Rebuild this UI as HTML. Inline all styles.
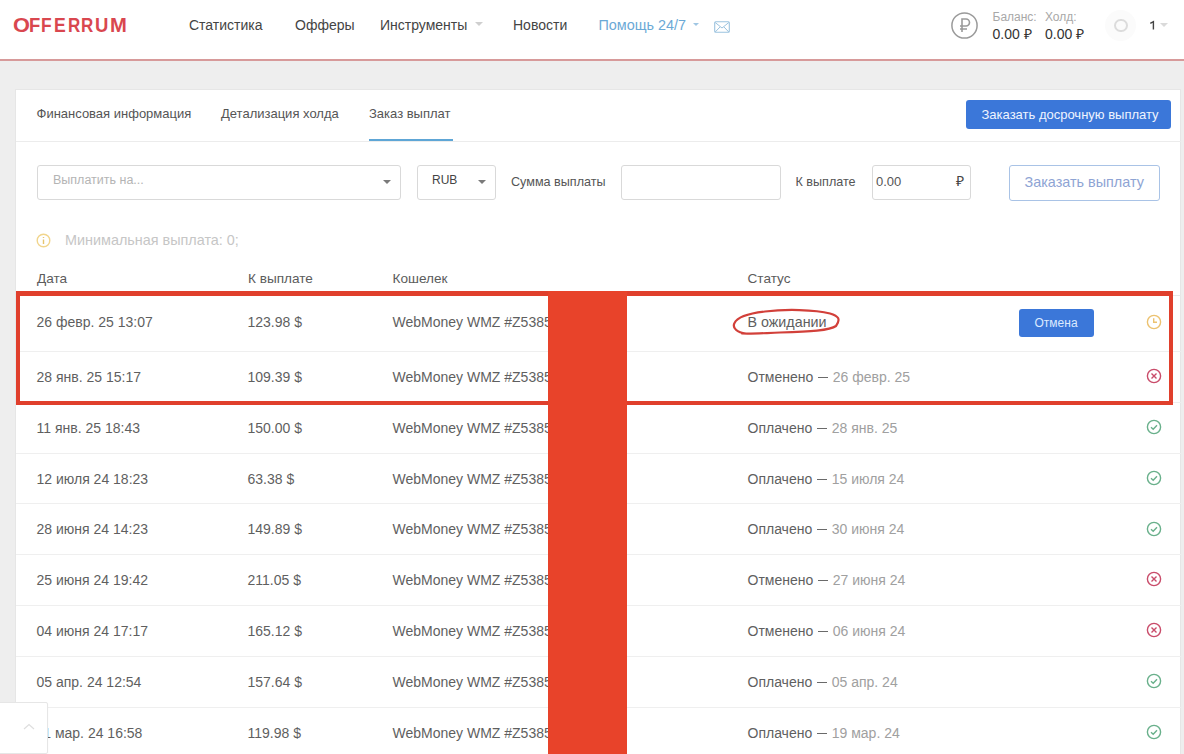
<!DOCTYPE html>
<html><head><meta charset="utf-8">
<style>
*{margin:0;padding:0;box-sizing:border-box}
html,body{width:1184px;height:754px;overflow:hidden;background:#eeeeee;font-family:"Liberation Sans",sans-serif;position:relative}
.a{position:absolute;white-space:nowrap}
.t14{font-size:14px;line-height:14px}
.t13{font-size:13px;line-height:13px}
.t12{font-size:12px;line-height:12px}
#hdr{position:absolute;left:0;top:0;width:1184px;height:59px;background:#fff}
#hline{position:absolute;left:0;top:59.3px;width:1184px;height:1.7px;background:#d79a9a}
.nav{color:#444}
#card{position:absolute;left:15px;top:89px;width:1166px;height:680px;background:#fff;border:1px solid #e6e6e6}
.inp{position:absolute;border:1px solid #d9d9d9;border-radius:3px;background:#fff}
.caret{position:absolute;width:0;height:0;border-left:4px solid transparent;border-right:4px solid transparent;border-top:4px solid #7a7a7a}
.div{position:absolute;left:16px;width:1165px;height:1px;background:#efefef}
.cell{color:#5f5f5f}
.sd{color:#a0a0a0}
.dash{display:inline-block;width:10px;height:1px;background:#6a6a6a;vertical-align:4px;margin:0 4.5px 0 5px}
</style></head><body>
<div id="hdr"></div>
<div id="hline"></div>
<div class="a" style="left:0;top:0;font-size:20px;line-height:20px;font-weight:bold;color:#d9474f"><span class="a" style="left:13.0px;top:15px;transform:scaleX(1.086);transform-origin:0 0">O</span><span class="a" style="left:29.3px;top:15px;transform:scaleX(0.92);transform-origin:0 0">F</span><span class="a" style="left:40.9px;top:15px;transform:scaleX(0.87);transform-origin:0 0">F</span><span class="a" style="left:53.6px;top:15px;transform:scaleX(0.88);transform-origin:0 0">E</span><span class="a" style="left:67.8px;top:15px;transform:scaleX(0.85);transform-origin:0 0">R</span><span class="a" style="left:80.9px;top:15px;transform:scaleX(0.85);transform-origin:0 0">R</span><span class="a" style="left:95.1px;top:15px;transform:scaleX(0.925);transform-origin:0 0">U</span><span class="a" style="left:110.3px;top:15px;transform:scaleX(1.01);transform-origin:0 0">M</span></div>
<div class="a t14 nav" style="left:189px;top:17.5px">Статистика</div>
<div class="a t14 nav" style="left:295px;top:17.5px">Офферы</div>
<div class="a t14 nav" style="left:380px;top:17.5px">Инструменты</div>
<div class="caret" style="left:475px;top:22px;border-top-color:#cfcfcf"></div>
<div class="a t14 nav" style="left:513px;top:17.5px">Новости</div>
<div class="a" style="left:598.5px;top:17.5px;font-size:14.4px;line-height:14px;color:#6ba9d6">Помощь 24/7</div>
<div class="caret" style="left:693px;top:22.5px;border-left-width:3.5px;border-right-width:3.5px;border-top-width:3.5px;border-top-color:#9fc6e3"></div>
<svg class="a" style="left:713.5px;top:20.5px" width="16" height="12" viewBox="0 0 16 12"><rect x="0.7" y="0.7" width="14.6" height="10.6" rx="1" fill="none" stroke="#9cc3df" stroke-width="1.1"/><path d="M1.2 1.5 L8 7 L14.8 1.5 M1.2 11 L6 6 M14.8 11 L10 6" fill="none" stroke="#9cc3df" stroke-width="1"/></svg>
<svg class="a" style="left:950px;top:11px" width="29" height="29" viewBox="0 0 29 29"><circle cx="14.5" cy="14.5" r="12.6" fill="none" stroke="#9a9a9a" stroke-width="1.5"/><path d="M12 21 V8 h4 a3.5 3.5 0 0 1 0 7 h-6 M10 18 h7" fill="none" stroke="#9a9a9a" stroke-width="1.6"/></svg>
<div class="a t12" style="left:992.5px;top:10.5px;color:#a8a8a8">Баланс:</div>
<div class="a t12" style="left:1045px;top:10.5px;color:#a8a8a8">Холд:</div>
<div class="a t14" style="left:992.5px;top:27px;color:#333">0.00 ₽</div>
<div class="a t14" style="left:1045px;top:27px;color:#333">0.00 ₽</div>
<div class="a" style="left:1105px;top:9.5px;width:31px;height:31px;border-radius:50%;background:#fbfbfb"></div>
<div class="a" style="left:1114px;top:18.5px;width:13.5px;height:13.5px;border-radius:50%;border:2.8px solid #dcdcdc"></div>
<svg class="a" style="left:1147px;top:19px" width="10" height="13" viewBox="0 0 10 13"><path d="M3.3 4.4 L6.4 2.6 V10.6" fill="none" stroke="#444" stroke-width="1.4"/></svg>
<div class="caret" style="left:1160px;top:23px;border-top-color:#dadada"></div>

<div id="card"></div>
<div class="a t13" style="left:36.5px;top:107px;color:#555">Финансовая информация</div>
<div class="a t13" style="left:221px;top:107px;color:#555">Детализация холда</div>
<div class="a t13" style="left:369px;top:107px;color:#555">Заказ выплат</div>
<div class="a" style="left:369px;top:139px;width:84px;height:3px;background:#5ea6d6"></div>
<div class="a" style="left:16px;top:141px;width:1165px;height:1px;background:#ececec"></div>
<div class="a" style="left:966px;top:100px;width:205px;height:29px;border-radius:3px;background:#3b77d9"></div>
<div class="a t13" style="left:981.5px;top:107.5px;color:#eef4ff">Заказать досрочную выплату</div>
<div class="inp" style="left:37px;top:164.5px;width:364px;height:35px"></div>
<div class="a" style="left:53px;top:173.5px;font-size:12.5px;line-height:13px;color:#b4b4b4">Выплатить на...</div>
<div class="caret" style="left:383px;top:180px"></div>
<div class="inp" style="left:417px;top:164.5px;width:79px;height:35px"></div>
<div class="a t12" style="left:432px;top:173.5px;color:#444">RUB</div>
<div class="caret" style="left:477.5px;top:180px"></div>
<div class="a" style="left:511px;top:176px;font-size:12.6px;line-height:13px;color:#555">Сумма выплаты</div>
<div class="inp" style="left:621px;top:164.5px;width:159.5px;height:35px"></div>
<div class="a" style="left:795.5px;top:176px;font-size:12.6px;line-height:13px;color:#555">К выплате</div>
<div class="inp" style="left:871.5px;top:164.5px;width:99px;height:35px"></div>
<div class="a t13" style="left:876px;top:175px;color:#555">0.00</div>
<div class="a t14" style="left:956px;top:174px;color:#444">₽</div>
<div class="a" style="left:1009px;top:164.5px;width:151px;height:36px;border:1px solid #a9c3e6;border-radius:3px"></div>
<div class="a" style="left:1024.5px;top:175px;font-size:14.4px;line-height:14px;color:#8ea4d4">Заказать выплату</div>
<svg class="a" style="left:36px;top:232.5px" width="15" height="15" viewBox="0 0 15 15"><circle cx="7.5" cy="7.5" r="6.3" fill="none" stroke="#f1d58c" stroke-width="1.4"/><path d="M7.5 6.5 V11 M7.5 4 V5" stroke="#e6c56f" stroke-width="1.4"/></svg>
<div class="a" style="left:65px;top:233px;font-size:14.4px;line-height:14px;color:#c6c6c6">Минимальная выплата: 0;</div>
<div class="a" style="left:37px;top:272px;font-size:13.6px;line-height:14px;color:#5c5c5c">Дата</div>
<div class="a" style="left:248px;top:272px;font-size:13.6px;line-height:14px;color:#5c5c5c">К выплате</div>
<div class="a" style="left:392.5px;top:272px;font-size:13.6px;line-height:14px;color:#5c5c5c">Кошелек</div>
<div class="a" style="left:747.5px;top:272px;font-size:13.6px;line-height:14px;color:#5c5c5c">Статус</div>
<div class="a" style="left:16px;top:295px;width:1165px;height:1px;background:#e8e8e8"></div>
<div class="a t14 cell" style="left:36.5px;top:315px">26 февр. 25 13:07</div>
<div class="a t14 cell" style="left:247.5px;top:315px">123.98 $</div>
<div class="a t14 cell" style="left:392.5px;top:315px">WebMoney WMZ #Z5385</div>
<div class="a cell" style="left:747.5px;top:315px;font-size:14.3px;line-height:14px">В ожидании</div>
<svg class="a" style="left:1145.5px;top:314.0px" width="16" height="16" viewBox="0 0 16 16"><circle cx="8" cy="8" r="6.6" fill="none" stroke="#ecc270" stroke-width="1.4"/><path d="M7.7 4.2 V8.3 H11" fill="none" stroke="#ecc270" stroke-width="1.4"/></svg>
<div class="div" style="top:351px"></div>
<div class="a t14 cell" style="left:36.5px;top:370px">28 янв. 25 15:17</div>
<div class="a t14 cell" style="left:247.5px;top:370px">109.39 $</div>
<div class="a t14 cell" style="left:392.5px;top:370px">WebMoney WMZ #Z5385</div>
<div class="a t14 cell" style="left:747.5px;top:370px">Отменено<span class="dash"></span><span class="sd">26 февр. 25</span></div>
<svg class="a" style="left:1145.5px;top:367.5px" width="16" height="16" viewBox="0 0 16 16"><circle cx="8" cy="8" r="6.6" fill="none" stroke="#c94c6a" stroke-width="1.4"/><path d="M5.5 5.5 L10.5 10.5 M10.5 5.5 L5.5 10.5" fill="none" stroke="#c94c6a" stroke-width="1.4"/></svg>
<div class="div" style="top:402px"></div>
<div class="a t14 cell" style="left:36.5px;top:421px">11 янв. 25 18:43</div>
<div class="a t14 cell" style="left:247.5px;top:421px">150.00 $</div>
<div class="a t14 cell" style="left:392.5px;top:421px">WebMoney WMZ #Z5385</div>
<div class="a t14 cell" style="left:747.5px;top:421px">Оплачено<span class="dash"></span><span class="sd">28 янв. 25</span></div>
<svg class="a" style="left:1145.5px;top:418.5px" width="16" height="16" viewBox="0 0 16 16"><circle cx="8" cy="8" r="6.6" fill="none" stroke="#69b08b" stroke-width="1.4"/><path d="M5 8.2 L7.2 10.2 L11 6.2" fill="none" stroke="#69b08b" stroke-width="1.4"/></svg>
<div class="div" style="top:453px"></div>
<div class="a t14 cell" style="left:36.5px;top:472px">12 июля 24 18:23</div>
<div class="a t14 cell" style="left:247.5px;top:472px">63.38 $</div>
<div class="a t14 cell" style="left:392.5px;top:472px">WebMoney WMZ #Z5385</div>
<div class="a t14 cell" style="left:747.5px;top:472px">Оплачено<span class="dash"></span><span class="sd">15 июля 24</span></div>
<svg class="a" style="left:1145.5px;top:469.5px" width="16" height="16" viewBox="0 0 16 16"><circle cx="8" cy="8" r="6.6" fill="none" stroke="#69b08b" stroke-width="1.4"/><path d="M5 8.2 L7.2 10.2 L11 6.2" fill="none" stroke="#69b08b" stroke-width="1.4"/></svg>
<div class="div" style="top:503px"></div>
<div class="a t14 cell" style="left:36.5px;top:522px">28 июня 24 14:23</div>
<div class="a t14 cell" style="left:247.5px;top:522px">149.89 $</div>
<div class="a t14 cell" style="left:392.5px;top:522px">WebMoney WMZ #Z5385</div>
<div class="a t14 cell" style="left:747.5px;top:522px">Оплачено<span class="dash"></span><span class="sd">30 июня 24</span></div>
<svg class="a" style="left:1145.5px;top:520.5px" width="16" height="16" viewBox="0 0 16 16"><circle cx="8" cy="8" r="6.6" fill="none" stroke="#69b08b" stroke-width="1.4"/><path d="M5 8.2 L7.2 10.2 L11 6.2" fill="none" stroke="#69b08b" stroke-width="1.4"/></svg>
<div class="div" style="top:554px"></div>
<div class="a t14 cell" style="left:36.5px;top:573px">25 июня 24 19:42</div>
<div class="a t14 cell" style="left:247.5px;top:573px">211.05 $</div>
<div class="a t14 cell" style="left:392.5px;top:573px">WebMoney WMZ #Z5385</div>
<div class="a t14 cell" style="left:747.5px;top:573px">Отменено<span class="dash"></span><span class="sd">27 июня 24</span></div>
<svg class="a" style="left:1145.5px;top:570.5px" width="16" height="16" viewBox="0 0 16 16"><circle cx="8" cy="8" r="6.6" fill="none" stroke="#c94c6a" stroke-width="1.4"/><path d="M5.5 5.5 L10.5 10.5 M10.5 5.5 L5.5 10.5" fill="none" stroke="#c94c6a" stroke-width="1.4"/></svg>
<div class="div" style="top:605px"></div>
<div class="a t14 cell" style="left:36.5px;top:624px">04 июня 24 17:17</div>
<div class="a t14 cell" style="left:247.5px;top:624px">165.12 $</div>
<div class="a t14 cell" style="left:392.5px;top:624px">WebMoney WMZ #Z5385</div>
<div class="a t14 cell" style="left:747.5px;top:624px">Отменено<span class="dash"></span><span class="sd">06 июня 24</span></div>
<svg class="a" style="left:1145.5px;top:621.5px" width="16" height="16" viewBox="0 0 16 16"><circle cx="8" cy="8" r="6.6" fill="none" stroke="#c94c6a" stroke-width="1.4"/><path d="M5.5 5.5 L10.5 10.5 M10.5 5.5 L5.5 10.5" fill="none" stroke="#c94c6a" stroke-width="1.4"/></svg>
<div class="div" style="top:656px"></div>
<div class="a t14 cell" style="left:36.5px;top:675px">05 апр. 24 12:54</div>
<div class="a t14 cell" style="left:247.5px;top:675px">157.64 $</div>
<div class="a t14 cell" style="left:392.5px;top:675px">WebMoney WMZ #Z5385</div>
<div class="a t14 cell" style="left:747.5px;top:675px">Оплачено<span class="dash"></span><span class="sd">05 апр. 24</span></div>
<svg class="a" style="left:1145.5px;top:672.5px" width="16" height="16" viewBox="0 0 16 16"><circle cx="8" cy="8" r="6.6" fill="none" stroke="#69b08b" stroke-width="1.4"/><path d="M5 8.2 L7.2 10.2 L11 6.2" fill="none" stroke="#69b08b" stroke-width="1.4"/></svg>
<div class="div" style="top:707px"></div>
<div class="a t14 cell" style="left:36.5px;top:726px">11 мар. 24 16:58</div>
<div class="a t14 cell" style="left:247.5px;top:726px">119.98 $</div>
<div class="a t14 cell" style="left:392.5px;top:726px">WebMoney WMZ #Z5385</div>
<div class="a t14 cell" style="left:747.5px;top:726px">Оплачено<span class="dash"></span><span class="sd">19 мар. 24</span></div>
<svg class="a" style="left:1145.5px;top:723.5px" width="16" height="16" viewBox="0 0 16 16"><circle cx="8" cy="8" r="6.6" fill="none" stroke="#69b08b" stroke-width="1.4"/><path d="M5 8.2 L7.2 10.2 L11 6.2" fill="none" stroke="#69b08b" stroke-width="1.4"/></svg>
<div class="a" style="left:1019px;top:308.5px;width:75px;height:28px;border-radius:3px;background:#3b77d9"></div>
<div class="a t12" style="left:1034.5px;top:316.5px;color:#dceaff">Отмена</div>
<div class="a" style="left:16px;top:291.2px;width:1157px;height:4.4px;background:#e03f2c"></div><div class="a" style="left:16px;top:400.8px;width:1157px;height:4.7px;background:#e03f2c"></div><div class="a" style="left:16px;top:291.2px;width:4.2px;height:114.3px;background:#e03f2c"></div><div class="a" style="left:1168.5px;top:291.2px;width:4.5px;height:114.3px;background:#e03f2c"></div>
<div class="a" style="left:548px;top:291px;width:79px;height:463px;background:#e8432a"></div>
<svg class="a" style="left:725px;top:302px" width="125" height="40" viewBox="0 0 125 40"><path d="M21 31.5 C12 30.5 7 26 9.5 21 C12 15.5 22 11.5 40 9.5 C60 7 90 7.5 105 11.5 C113.5 14 116 17 111 24 C105 28.5 85 29.5 55 30.5 C40 31 28 32 17 31.5" fill="none" stroke="#d2403a" stroke-width="2.2" stroke-linecap="round"/></svg>
<div class="a" style="left:-1px;top:702px;width:49px;height:52px;background:#fff;border:1px solid #e6e6e6;border-radius:0 2px 2px 0;box-shadow:0 1px 2px rgba(0,0,0,0.04)"></div>
<svg class="a" style="left:22px;top:722px" width="14" height="9" viewBox="0 0 14 9"><path d="M2 7 L7 2.5 L12 7" fill="none" stroke="#dedede" stroke-width="1.2"/></svg>
</body></html>
